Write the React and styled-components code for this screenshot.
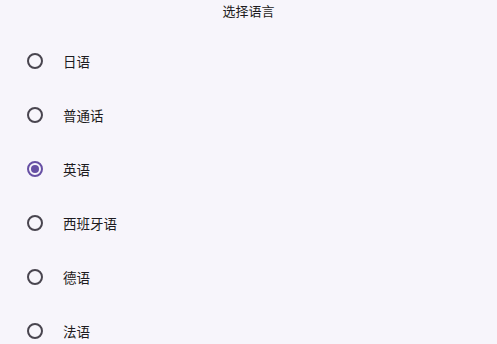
import React, { useState } from 'react'
import styled, { createGlobalStyle } from 'styled-components'

const GlobalStyle = createGlobalStyle`
    html, body {
        margin: 0;
        padding: 0;
        background-color: #f7f5fb;
    }
    body {
        font-family: "Roboto", "Noto Sans CJK SC", sans-serif;
        color: #1d1b20;
    }
`

const Page = styled.div`
    width: 497px;
    height: 344px;
    overflow: hidden;
    background-color: #f7f5fb;
`

const Header = styled.div`
    height: 24px;
    line-height: 24px;
    text-align: center;
    font-size: 13px;
    color: #1d1b20;
`

const List = styled.div`
    display: flex;
    flex-direction: column;
    padding-top: 10px;
`

const Row = styled.label`
    height: 54px;
    display: flex;
    align-items: center;
    gap: 20px;
    padding-left: 27px;
    cursor: pointer;
`

const Radio = styled.span`
    box-sizing: border-box;
    width: 16px;
    height: 16px;
    border-radius: 50%;
    border: 2px solid ${p => (p.$checked ? '#6750a4' : '#49454f')};
    display: flex;
    align-items: center;
    justify-content: center;
    &::after {
        content: '';
        width: 8px;
        height: 8px;
        border-radius: 50%;
        background-color: #6750a4;
        display: ${p => (p.$checked ? 'block' : 'none')};
    }
`

const Label = styled.span`
    font-size: 13.5px;
    color: #1d1b20;
`

const languages = ['日语', '普通话', '英语', '西班牙语', '德语', '法语']

const App = () => {
    const [selected, setSelected] = useState('英语')

    return (
        <Page>
            <GlobalStyle />
            <Header>选择语言</Header>
            <List>
                {languages.map(lang => (
                    <Row key={lang} onClick={() => setSelected(lang)}>
                        <Radio $checked={selected === lang} />
                        <Label>{lang}</Label>
                    </Row>
                ))}
            </List>
        </Page>
    )
}

export default App
